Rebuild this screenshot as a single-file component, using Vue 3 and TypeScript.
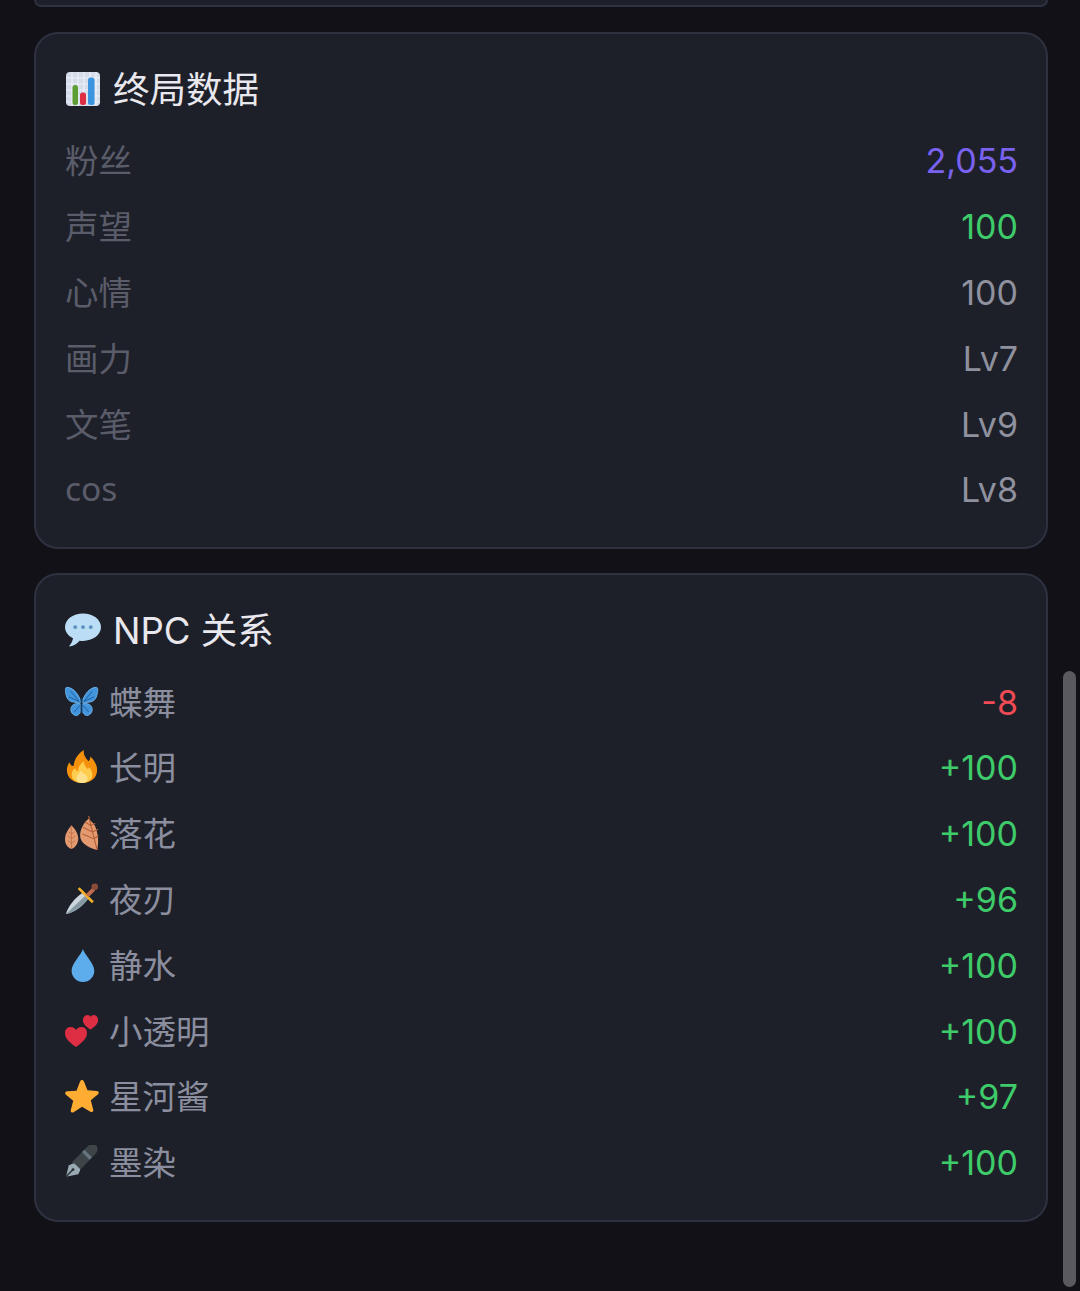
<script setup lang="ts">
interface Stat {
  label: string;
  value: string;
  tone?: string;
}

interface Npc {
  icon: string;
  name: string;
  value: string;
  tone: string;
}

const stats: Stat[] = [
  { label: "粉丝", value: "2,055", tone: "purple" },
  { label: "声望", value: "100", tone: "green" },
  { label: "心情", value: "100" },
  { label: "画力", value: "Lv7" },
  { label: "文笔", value: "Lv9" },
  { label: "cos", value: "Lv8" },
];

const npcs: Npc[] = [
  { icon: "butterfly", name: "蝶舞", value: "-8", tone: "red" },
  { icon: "fire", name: "长明", value: "+100", tone: "green" },
  { icon: "leaves", name: "落花", value: "+100", tone: "green" },
  { icon: "dagger", name: "夜刃", value: "+96", tone: "green" },
  { icon: "drop", name: "静水", value: "+100", tone: "green" },
  { icon: "hearts", name: "小透明", value: "+100", tone: "green" },
  { icon: "star", name: "星河酱", value: "+97", tone: "green" },
  { icon: "pen", name: "墨染", value: "+100", tone: "green" },
];
</script>

<template>
  <div class="page">
    <div class="card-tail"></div>

    <section class="card">
      <h2 class="title">
        <svg class="title-icon" viewBox="0 0 36 36">
          <rect x="1" y="1" width="34" height="34" rx="4" fill="#d5dcea" />
          <path d="M1 7h34M1 13h34M1 19h34M1 25h34M1 31h34M7 1v34M13 1v34M19 1v34M25 1v34M31 1v34" stroke="#eef1f7" stroke-width="1.2" />
          <rect x="7.500" y="14" width="5.500" height="20" rx="2.500" fill="#5c9e31" />
          <rect x="15" y="21.500" width="6" height="12.500" rx="2.500" fill="#dd2e44" />
          <rect x="23" y="6.500" width="6.500" height="27.500" rx="2.500" fill="#3b94e0" />
        </svg>
        <span>终局数据</span>
      </h2>
      <div class="rows">
        <div v-for="stat in stats" :key="stat.label" class="row">
          <span class="stat-label">{{ stat.label }}</span>
          <span class="value" :class="stat.tone">{{ stat.value }}</span>
        </div>
      </div>
    </section>

    <section class="card">
      <h2 class="title">
        <svg class="title-icon" viewBox="0 0 37 36">
          <path d="M18.5 1C8.6 1 0 6.900 0 15c0 5 3.300 9.200 8.300 11.500-.5 3-2.100 5.500-4.300 8.500 4.500-.6 8.200-2.600 11-6 1 .2 2.400.2 3.500.2 9.900 0 18.500-6 18.500-14.200S28.400 1 18.500 1z" fill="#bbddf5" />
          <circle cx="10.500" cy="15" r="2" fill="#5a8fc0" />
          <circle cx="18.500" cy="15" r="2" fill="#5a8fc0" />
          <circle cx="26.500" cy="15" r="2" fill="#5a8fc0" />
        </svg>
        <span>NPC 关系</span>
      </h2>
      <div class="rows">
        <div v-for="npc in npcs" :key="npc.name" class="row">
          <span class="npc-name">
            <svg class="npc-icon" viewBox="0 0 36 36">
              <g v-if="npc.icon === 'butterfly'" transform="translate(0 .5)">
                <path d="M17 18C15 10 9 2 2 2 0 2 0 5 1 9c1 5 3 8 8 8.500 3 .3 5.500 1.500 8 .5z" fill="#4295dc" stroke="#6fb4ea" stroke-width="1" />
                <path d="M18 18c2-8 8-16 15-16 2 0 2 3 1 7-1 5-3 8-8 8.500-3 .3-5.500 1.500-8 .5z" fill="#4295dc" stroke="#6fb4ea" stroke-width="1" />
                <path d="M16.500 19.500c-4-1-9 0-10 4-.8 3 .5 7 4 8 3 .8 5-1 6-4 .5-2.500.8-5 0-8z" fill="#4295dc" stroke="#6fb4ea" stroke-width="1" />
                <path d="M18.500 19.500c4-1 9 0 10 4 .8 3-.5 7-4 8-3 .8-5-1-6-4-.5-2.500-.8-5 0-8z" fill="#4295dc" stroke="#6fb4ea" stroke-width="1" />
                <path d="M6 6l9 11M29 6l-9 11M4 12l11 5M31 12l-11 5M10 28l6-7M25 28l-6-7" stroke="#1d5f9e" stroke-width="1" fill="none" />
                <rect x="16.500" y="13" width="2" height="16" rx="1" fill="#143d63" />
              </g>
              <g v-else-if="npc.icon === 'fire'">
                <path d="M18 35C9 35 2 30 2 21c0-4 2-7 3-8 .5 3 2 4 4 4 1-6 3-12 11-17-1 5 2 9 5 12 1-1 2-3 2-5 4 4 7 9 7 14 0 9-7 14-16 14z" fill="#f4900c" />
                <path d="M18 35c-6 0-11-3-11-9 0-3 2-6 4-7 0 2 1 3 3 3 0-4 2-7 6-10 0 4 2 6 4 8 1 0 1-1 1-2 2 2 4 5 4 8 0 6-5 9-11 9z" fill="#ffcc4d" />
                <path d="M18 35c-3 0-6-2-6-5 0-3 3-5 5-8 1 3 7 4 7 8 0 3-3 5-6 5z" fill="#ffe08a" />
              </g>
              <g v-else-if="npc.icon === 'leaves'">
                <path d="M7 10C3 14 0 19 0 25c0 5 3 9 7 10 4-2 7-6 7-11 0-5-3-10-7-14z" fill="#e39a70" />
                <path d="M6.500 10l.5 25M7 19l-3-2M7 24l-4-3M7 29l-4-3M7 19l3-2M7 24l4-3M7 29l4-3" stroke="#c2734a" stroke-width="1" fill="none" />
                <path d="M25 3c-5 4-9 11-9 18 0 7 8 13 18 15 2-8 1-16-1-22-1-5-5-8-8-11z" fill="#e39a70" />
                <path d="M25 0l9 36M27 10l-6-4M29 17l-10-5M30.500 24l-12-5M27 10l5-2M29 17l6-3M30.500 24l5-3" stroke="#b5623a" stroke-width="1.200" fill="none" />
              </g>
              <g v-else-if="npc.icon === 'dagger'">
                <path d="M1 34C3 26 10 17 19 11l6 6C19 26 10 32 1 34z" fill="#ccd6dd" />
                <path d="M1 34l21-20 3 3C19 26 10 32 1 34z" fill="#8899a6" />
                <path d="M14 7l2-2 15 15-2 2z" transform="translate(-.5 .5)" fill="#f4b02a" />
                <path d="M22 13l7-7 3 3-7 7z" fill="#c1694f" />
                <circle cx="31.500" cy="5" r="3.500" fill="#8a4b38" />
              </g>
              <g v-else-if="npc.icon === 'drop'">
                <path d="M19 1c-1.500 6-12 15-12 23a12 12 0 0 0 24 0C31 16 20.500 7 19 1z" fill="#5dadec" />
              </g>
              <g v-else-if="npc.icon === 'hearts'">
                <path d="M11.700 35C5 30 0 26 0 20c0-4 3-6.200 6-6.200 2.500 0 4.500 1.200 5.700 3.200 1.300-2 3.300-3.200 5.800-3.200 3 0 5.800 2.200 5.800 6.200 0 6-5.300 10-11.600 15z" fill="#dd2e44" />
                <path d="M27 16.500c-4-3-8-5.500-8-10C19 3 21.500 1 24 1c1.500 0 2.500 1 3 2 .5-1 2-2 3.500-2C33 1 35 3 35 6.500c0 4.500-4 7-8 10z" fill="#dd2e44" />
              </g>
              <g v-else-if="npc.icon === 'star'">
                <path d="M18 1c1 0 1.700.7 2.100 1.700l3.700 9.300 9.900.6c2 .1 2.700 2.200 1.300 3.500l-7.700 6.400 2.600 10c.5 2-1.400 3.200-3 2.200L18 29.500l-8.900 5.700c-1.600 1-3.500-.2-3-2.200l2.600-10-7.700-6.400C-.4 15.300.3 13.200 2.300 13.100l9.900-.6 3.700-9.800c.4-1 1.100-1.700 2.100-1.700z" fill="#ffac33" />
              </g>
              <g v-else transform="translate(0 -1.500)">
                <path d="M7 20L25 2c2-2 6-2 8 0s2 6 0 8L16 28z" fill="#3d4549" />
                <path d="M18 9l8 8 2.500-2.500-8-8z" fill="#66757f" />
                <path d="M1 35l3-12c2-1 4-2 6-2l6 6c0 2-1 4-2 5.500z" fill="#99aab5" />
                <path d="M1 35l7-7" stroke="#292f33" stroke-width="1.500" />
                <circle cx="8.500" cy="27.500" r="1.500" fill="#292f33" />
              </g>
            </svg>
            <span>{{ npc.name }}</span>
          </span>
          <span class="value" :class="npc.tone">{{ npc.value }}</span>
        </div>
      </div>
    </section>

    <div class="scrollbar"></div>
  </div>
</template>

<style>
html,
body {
  margin: 0;
  background: #111117;
}
</style>

<style scoped>
.page {
  position: relative;
  height: 1291px;
  box-sizing: border-box;
  padding: 0 32px 0 34px;
  background: #111117;
  overflow: hidden;
  font-family: Inter, "Noto Sans CJK SC", sans-serif;
}

.card-tail {
  height: 7px;
  margin-bottom: 25px;
  box-sizing: border-box;
  border: 2px solid #2e3240;
  border-top: 0;
  border-radius: 0 0 22px 22px;
  background: #1e2029;
}

.card {
  box-sizing: border-box;
  margin-bottom: 24.400px;
  padding: 28px 28px 26px 29px;
  border: 2px solid #2e3240;
  border-radius: 24px;
  background: #1e2029;
}

.title {
  display: flex;
  align-items: center;
  gap: 12px;
  height: 50px;
  margin: 0 0 14px;
  font-size: 36.500px;
  font-weight: 400;
  color: #e8e8ee;
}

.title-icon {
  width: 36px;
  height: 36px;
  margin-top: 4px;
  flex: none;
}

.row {
  display: flex;
  align-items: center;
  justify-content: space-between;
  height: 65.8px;
}

.stat-label {
  font-family: "Noto Sans", "Noto Sans CJK SC", sans-serif;
  font-size: 33.500px;
  color: #5a5c6a;
}

.npc-name {
  display: flex;
  align-items: center;
  gap: 10px;
  font-size: 33.500px;
  color: #8b8e9e;
}

.npc-icon {
  width: 34px;
  height: 34px;
  margin-top: 3px;
  flex: none;
}

.value {
  padding-top: 4px;
  font-size: 34px;
  color: #8f919e;
}

.purple {
  color: #7a62f0;
}

.green {
  color: #3ecb6a;
}

.red {
  color: #f04b55;
}

.scrollbar {
  position: absolute;
  top: 671px;
  right: 4px;
  width: 13px;
  height: 616px;
  border-radius: 7px;
  background: #5a5a5e;
}
</style>
